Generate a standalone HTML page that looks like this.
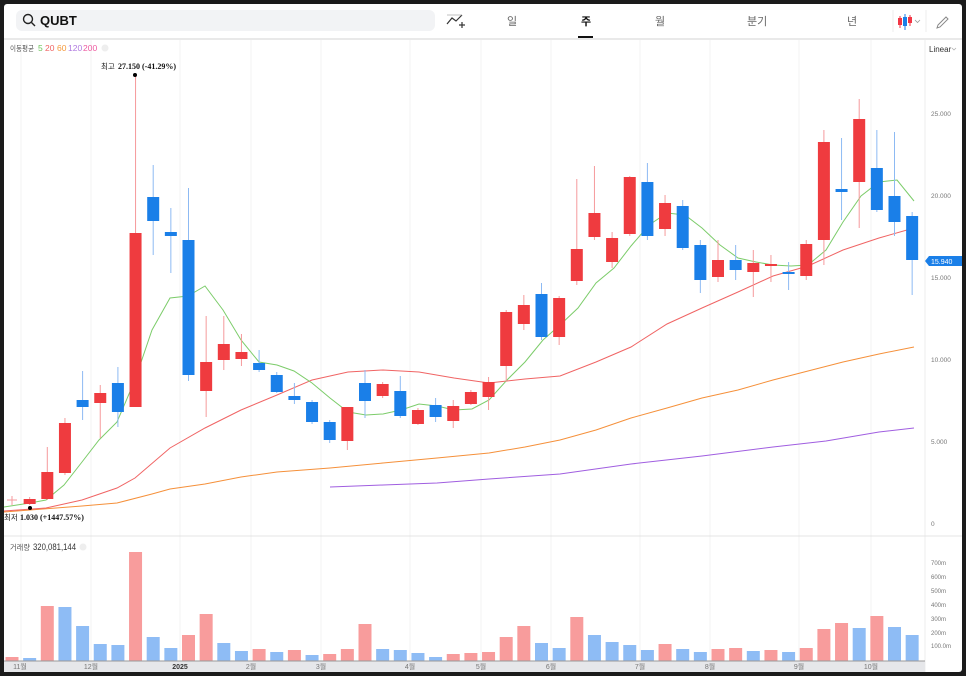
<!DOCTYPE html><html><head><meta charset="utf-8"><style>
body{margin:0;width:966px;height:676px;background:#1b1b1b;overflow:hidden;font-family:"Liberation Sans","Noto Sans CJK KR",sans-serif}
#p{position:absolute;left:4px;top:4px;width:958px;height:668px;background:#fff;border-radius:3px;overflow:hidden}
</style></head><body><div id="p"></div>
<svg id="s" width="966" height="676" style="position:absolute;left:0;top:0" font-family="Liberation Sans, Noto Sans CJK KR, sans-serif"></svg>
<script>
var s='';
function L(x1,y1,x2,y2,c,w){s+=`<line x1="${x1}" y1="${y1}" x2="${x2}" y2="${y2}" stroke="${c}" stroke-width="${w||1}"/>`}
function R(x,y,w,h,c,r){s+=`<rect x="${x}" y="${y}" width="${w}" height="${h}" fill="${c}" rx="${r||0}"/>`}
function T(x,y,t,sz,c,extra){s+=`<text x="${x}" y="${y}" font-size="${sz}" fill="${c}" ${extra||''}>${t}</text>`}
R(16,10,419,21,'#f2f3f5',6);
s+='<circle cx="28" cy="19" r="4.5" fill="none" stroke="#222" stroke-width="1.4"/>';L(31.5,22.5,35,26,'#222',1.4);
T(40,25,'QUBT',13,'#111','font-weight="bold"');
s+='<path d="M447 24 L452 18 L456 21 L462 15" fill="none" stroke="#333" stroke-width="1.2"/>';L(447,15,462,15,'#999',.6);L(459,25,465,25,'#333',1.2);L(462,22,462,28,'#333',1.2);
T(507,25,'일',11,'#666');T(581,25,'주',11,'#111','font-weight="bold"');R(578,36,15,2,'#111');
T(655,25,'월',11,'#666');T(747,25,'분기',11,'#666');T(847,25,'년',11,'#666');
L(893,10,893,32,'#eee');L(926,10,926,32,'#eee');
L(900,16,900,28,'#f23645');R(898,18,4,7,'#f23645');L(905,14,905,30,'#1a7fe8');R(903,17,4,9,'#1a7fe8');L(910,15,910,26,'#f23645');R(908,17,4,6,'#f23645');
s+='<path d="M915 20 L917.5 22.5 L920 20" fill="none" stroke="#999" stroke-width=".8"/>';
s+='<path d="M938 25 L946 17 L948 19 L940 27 L937 28 Z" fill="none" stroke="#888" stroke-width="1"/>';
L(4,39,962,39,'#dcdcdc',1.2);
[21,91,180,251,321,410,481,551,640,710,799,871].forEach(x=>L(x,40,x,661,'#f3f3f3'));
L(925,40,925,672,'#ececec');L(4,536,962,536,'#e4e4e4');
T(10,51,'이동평균',7.5,'#555','textLength="24" lengthAdjust="spacingAndGlyphs"');T(38,51,'5',8.5,'#6cc45a');T(45,51,'20',8.5,'#f06464');T(57,51,'60',8.5,'#f59a3c');T(68,51,'120',8.5,'#b07ae0');T(83,51,'200',8.5,'#ee5aa0');
s+='<circle cx="105" cy="48" r="3.5" fill="#eee"/>';
T(929,52,'Linear',8,'#333');s+='<path d="M952 48 L954 50 L956 48" fill="none" stroke="#aaa" stroke-width=".7"/>';
[[25000,'25.000'],[20000,'20.000'],[15000,'15.000'],[10000,'10.000'],[5000,'5.000'],[0,'0']].forEach(a=>T(931,523-a[0]*0.0164+3,a[1],6.5,'#777'));
function P(pts,c){s+=`<polyline points="${pts}" fill="none" stroke="${c}" stroke-width="1"/>`}
P('330,487 383,485 437,483 489,479 560,474 631,464 702,456 773,447 826,441 879,432 914,428','#a05ee0');
P('4,512 82,506 117,503 152,494 170,489 205,484 241,477 277,472 330,468 383,463 437,458 489,453 525,447 560,440 596,430 631,418 667,408 702,398 738,390 773,380 808,371 843,362 879,354 914,347','#f5903a');
P('4,511 46,508 82,500 117,488 135,478 170,448 205,428 241,410 277,395 312,380 348,372 383,370 419,372 454,378 489,383 525,379 560,376 596,362 631,347 667,324 702,308 738,292 773,276 808,266 843,250 879,238 914,228','#f06464');
P('4,507 30,503 46,500 64,485 82,462 99,440 117,422 135,380 152,330 170,298 188,296 205,286 223,310 241,340 259,362 277,365 294,371 312,383 330,398 348,412 366,415 383,414 401,410 419,404 437,406 454,410 472,409 489,400 507,380 525,362 543,340 560,325 578,308 596,283 614,268 631,246 649,225 667,213 685,215 702,228 720,245 738,258 756,262 773,265 791,266 808,265 826,250 843,222 861,196 879,182 897,180 914,201','#7ccc6a');
var C=[[500,501,496,505,'r'],[499,504,497,505,'r'],[472,499,447,500,'r'],[423,473,418,475,'r'],[400,407,371,420,'b'],[393,403,385,438,'r'],[383,412,367,427,'b'],[233,407,75,407,'r'],[197,221,165,255,'b'],[232,236,208,273,'b'],[240,375,188,381,'b'],[362,391,316,417,'r'],[344,360,316,370,'r'],[352,359,334,366,'r'],[363,370,350,372,'b'],[375,392,372,393,'b'],[396,400,383,404,'b'],[402,422,400,424,'b'],[422,440,420,443,'b'],[407,441,407,450,'r'],[383,401,370,418,'b'],[384,396,382,398,'r'],[391,416,376,418,'b'],[410,424,408,425,'r'],[405,417,398,422,'b'],[406,421,400,428,'r'],[392,404,390,405,'r'],[382,397,377,410,'r'],[312,366,310,382,'r'],[305,324,295,330,'r'],[294,337,283,340,'b'],[298,337,296,345,'r'],[249,281,179,285,'r'],[213,237,166,240,'r'],[238,262,232,268,'r'],[177,234,176,236,'r'],[182,236,163,240,'b'],[203,229,195,236,'r'],[206,248,200,250,'b'],[245,280,240,293,'b'],[260,277,240,282,'r'],[260,270,245,280,'b'],[263,272,250,297,'r'],[264,266,255,282,'r'],[272,274,262,290,'b'],[244,276,240,280,'r'],[142,240,130,265,'r'],[189,192,138,220,'b'],[119,182,99,228,'r'],[168,210,130,212,'b'],[196,222,132,236,'b'],[216,260,212,295,'b']];
C.forEach((c,i)=>{var x=12+i*17.65,col=c[4]=='r'?'#ef3b3f':'#1a7fe8',wc=c[4]=='r'?'#f59a9c':'#8dbaf3';L(x,c[2],x,c[3],wc);if(i==0){L(x-5,c[0],x+5,c[0],wc)}else R(x-6,c[0],12,Math.max(c[1]-c[0],2),col)});
s+='<circle cx="135" cy="75" r="2" fill="#000"/><circle cx="30" cy="508" r="2" fill="#000"/>';
T(101,69,'최고',7.5,'#222');T(118,69,'27.150 (-41.29%)',8,'#111','font-family="Liberation Serif" font-weight="bold"');
T(4,520,'최저',7.5,'#222');T(20,520,'1.030 (+1447.57%)',8,'#111','font-family="Liberation Serif" font-weight="bold"');
s+='<path d="M925 261 L929 256 L962 256 L962 266 L929 266 Z" fill="#1a7fe8"/>';T(931,264,'15.940',7,'#fff');
T(10,550,'거래량',7.5,'#555','textLength="20" lengthAdjust="spacingAndGlyphs"');T(33,550,'320,081,144',9,'#333','textLength="43" lengthAdjust="spacingAndGlyphs"');s+='<circle cx="83" cy="547" r="3.5" fill="#eee"/>';
var V=[[657,'r'],[658,'b'],[606,'r'],[607,'b'],[626,'b'],[644,'b'],[645,'b'],[552,'r'],[637,'b'],[648,'b'],[635,'r'],[614,'r'],[643,'b'],[651,'b'],[649,'r'],[652,'b'],[650,'r'],[655,'b'],[654,'r'],[649,'r'],[624,'r'],[649,'b'],[650,'b'],[653,'b'],[657,'b'],[654,'r'],[652,'r'],[637,'r'],[626,'r'],[643,'b'],[648,'b'],[617,'r'],[635,'b'],[642,'b'],[645,'b'],[650,'b'],[644,'r'],[649,'b'],[652,'b'],[649,'r'],[648,'r'],[651,'b'],[650,'r'],[652,'b'],[648,'r'],[629,'r'],[623,'r'],[628,'b'],[616,'r'],[627,'b'],[635,'b']];
V.splice(26,0,[653,'r']);
V.forEach((v,i)=>{var x=12+i*17.65;R(x-6.5,v[0],13,661-v[0],v[1]=='r'?'#f89c9c':'#8ebcf5')});
[['700m',563],['600m',577],['500m',591],['400m',605],['300m',619],['200m',633],['100.0m',646]].forEach(a=>T(931,a[1]+2,a[0],6,'#777'));
R(4,661,921,11,'#e6e7ea');L(4,661,925,661,'#999');
[['11월',20],['12월',91],['2025',180],['2월',251],['3월',321],['4월',410],['5월',481],['6월',551],['7월',640],['8월',710],['9월',799],['10월',871]].forEach(a=>T(a[1],669,a[0],7,a[0]=='2025'?'#333':'#777','text-anchor="middle"'+(a[0]=='2025'?' font-weight="bold"':'')));
document.getElementById('s').innerHTML=s;
</script></body></html>
